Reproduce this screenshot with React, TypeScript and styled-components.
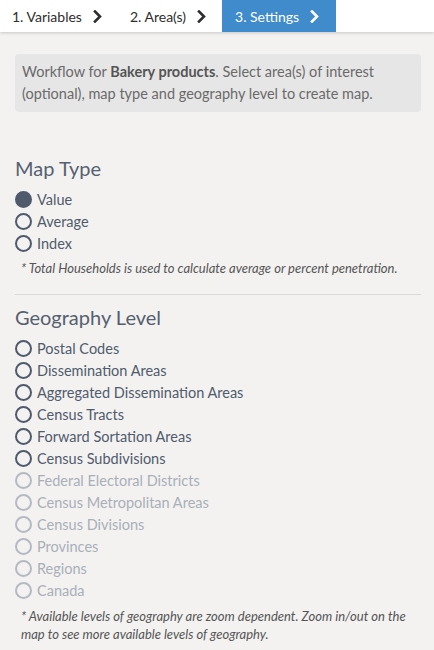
import styled, { createGlobalStyle, css } from "styled-components";

const GlobalStyle = createGlobalStyle`
  html, body {
    margin: 0;
    padding: 0;
    background: #f3f2f1;
    font-family: Lato, "Liberation Sans", sans-serif;
  }
  * {
    box-sizing: border-box;
  }
`;

const Page = styled.div`
  width: 434px;
  min-height: 650px;
  background: #f3f2f1;
  color: #505b6c;
`;

const TabBar = styled.nav`
  display: flex;
  height: 32px;
  background: #ffffff;
  box-shadow: 0 1px 3px rgba(0, 0, 0, 0.18);
`;

const Tab = styled.div<{ active?: boolean }>`
  display: flex;
  align-items: center;
  gap: 11px;
  padding: 0 16px 0 12px;
  font-size: 14px;
  color: #2e2e2e;
  ${({ active }) =>
    active &&
    css`
      background: #3f8bcb;
      color: #ffffff;
      padding: 0 17px 0 13px;
    `}
`;

const Chevron = ({ color }: { color: string }) => (
  <svg width="9" height="13" viewBox="0 0 9 13">
    <path
      d="M2 1.5 L7 6.5 L2 11.5"
      fill="none"
      stroke={color}
      strokeWidth="2.6"
      strokeLinecap="square"
    />
  </svg>
);

const Content = styled.main`
  padding: 22px 13px 0 15px;
`;

const InfoBox = styled.p`
  margin: 0;
  padding: 7px 7px 7px 7px;
  background: #e6e6e6;
  border-radius: 4px;
  font-size: 14.5px;
  line-height: 22px;
  color: #6a6a6a;

  b {
    color: #555;
  }
`;

const Section = styled.section`
  margin-top: 41px;

  & + & {
    margin-top: 17px;
    padding-top: 7px;
    border-top: 1px solid #d9d9d9;
  }
`;

const Heading = styled.h2`
  margin: 0 0 5px 0;
  font-size: 20px;
  font-weight: 400;
  line-height: 30px;
  color: #56606f;
`;

const RadioList = styled.div`
  display: flex;
  flex-direction: column;
`;

const RadioRow = styled.label<{ disabled?: boolean }>`
  display: flex;
  align-items: center;
  gap: 5px;
  height: 22px;
  font-size: 14.5px;
  color: ${({ disabled }) => (disabled ? "#a9afb8" : "#505b6c")};
`;

const Circle = styled.span<{ checked?: boolean; disabled?: boolean }>`
  width: 17px;
  height: 17px;
  border-radius: 50%;
  border: 2px solid ${({ disabled }) => (disabled ? "#b4bac3" : "#4f5a6d")};
  background: ${({ checked }) => (checked ? "#4f5a6d" : "transparent")};
`;

const Note = styled.p<{ gap: number }>`
  margin: ${({ gap }) => gap}px 0 0 6px;
  font-size: 13px;
  font-style: italic;
  line-height: 18px;
  color: #555;
`;

const mapTypes = [
  { label: "Value", checked: true },
  { label: "Average" },
  { label: "Index" },
];

const levels = [
  { label: "Postal Codes" },
  { label: "Dissemination Areas" },
  { label: "Aggregated Dissemination Areas" },
  { label: "Census Tracts" },
  { label: "Forward Sortation Areas" },
  { label: "Census Subdivisions" },
  { label: "Federal Electoral Districts", disabled: true },
  { label: "Census Metropolitan Areas", disabled: true },
  { label: "Census Divisions", disabled: true },
  { label: "Provinces", disabled: true },
  { label: "Regions", disabled: true },
  { label: "Canada", disabled: true },
];

type Option = { label: string; checked?: boolean; disabled?: boolean };

const Radio = ({ label, checked, disabled }: Option) => (
  <RadioRow disabled={disabled}>
    <Circle checked={checked} disabled={disabled} />
    {label}
  </RadioRow>
);

export default function App() {
  return (
    <Page>
      <GlobalStyle />
      <TabBar>
        <Tab>
          1. Variables <Chevron color="#2e2e2e" />
        </Tab>
        <Tab>
          2. Area(s) <Chevron color="#2e2e2e" />
        </Tab>
        <Tab active>
          3. Settings <Chevron color="#ffffff" />
        </Tab>
      </TabBar>
      <Content>
        <InfoBox>
          Workflow for <b>Bakery products</b>. Select area(s) of interest
          (optional), map type and geography level to create map.
        </InfoBox>

        <Section>
          <Heading>Map Type</Heading>
          <RadioList>
            {mapTypes.map((o) => (
              <Radio key={o.label} {...o} />
            ))}
          </RadioList>
          <Note gap={5}>
            * Total Households is used to calculate average or percent
            penetration.
          </Note>
        </Section>

        <Section>
          <Heading>Geography Level</Heading>
          <RadioList>
            {levels.map((o) => (
              <Radio key={o.label} {...o} />
            ))}
          </RadioList>
          <Note gap={6}>
            * Available levels of geography are zoom dependent. Zoom in/out on
            the map to see more available levels of geography.
          </Note>
        </Section>
      </Content>
    </Page>
  );
}
